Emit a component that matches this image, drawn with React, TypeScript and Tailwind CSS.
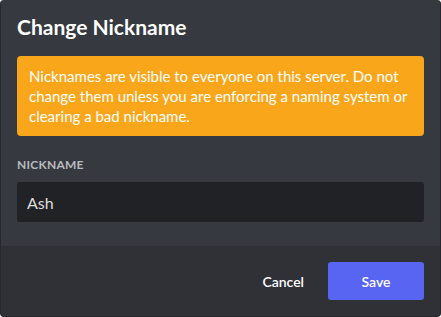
export default function App() {
  return (
    <div
      className="flex h-[317px] w-[441px] flex-col overflow-hidden rounded-[4px] border-x border-b border-[#26282c] bg-[#36393f]"
      style={{ fontFamily: 'Lato, "Noto Sans", sans-serif' }}
    >
      {/* Body */}
      <div className="flex flex-1 flex-col px-4 pt-[14px]">
        <h2 className="text-[21px] font-bold leading-[26px] text-white">Change Nickname</h2>

        <div className="mt-[16px] rounded-[4px] bg-[#faa61a] px-3 py-[10px] text-[15px] leading-[20px] text-white">
          Nicknames are visible to everyone on this server. Do not change them unless you are
          enforcing a naming system or clearing a bad nickname.
        </div>

        <label className="mt-[21px] text-[12px] font-bold uppercase leading-[16px] tracking-[0.02em] text-[#b9bbbe]">
          Nickname
        </label>
        <input
          defaultValue="Ash"
          className="mt-[9px] h-[40px] w-full rounded-[3px] bg-[#202225] px-[10px] text-[16px] text-[#dcddde] outline-none"
        />
      </div>

      {/* Footer */}
      <div className="flex h-[70px] items-center justify-end gap-[8px] bg-[#2f3136] px-4">
        <button className="h-[38px] px-4 text-[14px] font-semibold text-white">Cancel</button>
        <button className="h-[38px] w-[96px] rounded-[3px] bg-[#5865f2] text-[14px] font-semibold text-white">
          Save
        </button>
      </div>
    </div>
  );
}
